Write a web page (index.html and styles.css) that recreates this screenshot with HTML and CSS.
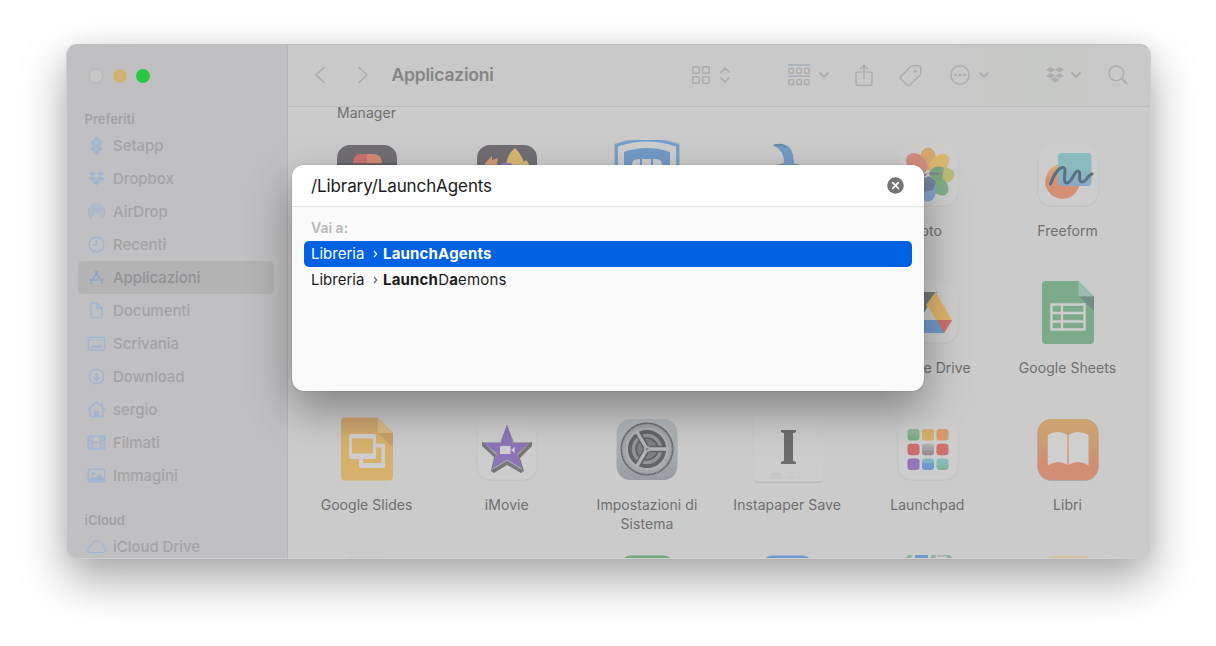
FILE: index.html
```html
<!DOCTYPE html>
<html lang="it">
<head>
<meta charset="utf-8">
<title>Applicazioni</title>
<link rel="stylesheet" href="styles.css">
</head>
<body>
<div class="window">
  <aside class="sidebar">
    <div class="lights"><i class="close"></i><i class="min"></i><i class="max"></i></div>
    <h2>Preferiti</h2>
    <ul>
      <li><svg viewBox="0 0 20 20"><g fill="currentColor" stroke="none"><path d="M10 0l3.200 3.100-3.200 3.100-3.200-3.100zM6.500 3.600l3.200 3.100-3.200 3.100-3.200-3.100zM13.500 3.600l3.200 3.100-3.200 3.100-3.200-3.100zM10 7.100l3 2.900-3 2.900L7 10zM6.500 10.200l3.200 3.100-3.200 3.100-3.200-3.100zM13.500 10.200l3.200 3.100-3.200 3.100-3.200-3.100zM10 13.800l3.200 3.100L10 20l-3.200-3.100z"/></g></svg><span>Setapp</span></li>
      <li><svg viewBox="0 0 20 20"><path fill="currentColor" stroke="none" d="M5.700 2l4.300 2.700-4.300 2.800L1.400 4.700zM14.300 2l4.300 2.700-4.300 2.800L10 4.700zM5.700 7.500l4.300 2.800L5.700 13l-4.300-2.700zM14.300 7.500l4.300 2.800-4.300 2.700-4.300-2.700zM10 11.200l4.300 2.900-4.300 2.900-4.300-2.900z"/></svg><span>Dropbox</span></li>
      <li><svg viewBox="0 0 20 20"><path stroke-width="1.300" d="M4.700 17a8.400 8.400 0 1 1 10.600 0M6.400 14.700a5.800 5.800 0 1 1 7.200 0M8 12.700a3.300 3.300 0 1 1 4 0"/><circle cx="10" cy="10.300" r="1.500" fill="currentColor" stroke="none"/></svg><span>AirDrop</span></li>
      <li><svg viewBox="0 0 20 20"><circle cx="10" cy="10" r="7.700"/><path d="M10 5v5.300H6"/></svg><span>Recenti</span></li>
      <li class="on"><svg viewBox="0 0 20 20"><path stroke-width="1.900" d="M8.700 3l4.800 8.500M14.500 13.300l1.700 3M11.300 3L6.200 12M5 14.500l-1.200 2M2 12.800h9.500M14 12.800h4"/></svg><span>Applicazioni</span></li>
      <li><svg viewBox="0 0 20 20"><path d="M5 2.300h5.800l5 5.200v8.800q0 1-1 1H5q-1 0-1-1v-13q0-1 1-1zM10.500 2.500v5.200h5"/></svg><span>Documenti</span></li>
      <li><svg viewBox="0 0 20 20"><rect x="1.400" y="3.300" width="17.200" height="13.600" rx="1.700"/><path d="M2 6h16" stroke-dasharray="1.500 1"/><path fill="currentColor" stroke="none" d="M4.500 12h11v2.500h-11z"/></svg><span>Scrivania</span></li>
      <li><svg viewBox="0 0 20 20"><circle cx="10" cy="10" r="7.700"/><path d="M10 5.700v8M6.700 10.600l3.300 3.300 3.300-3.300"/></svg><span>Download</span></li>
      <li><svg viewBox="0 0 20 20"><path d="M1 10l9-7.800 9 7.800M3.500 8.500v8.900h13V8.500M15.800 3v3.700"/><path fill="currentColor" stroke="none" d="M7.500 11.500h5V17h-5z"/></svg><span>sergio</span></li>
      <li><svg viewBox="0 0 20 20"><rect x="1.300" y="3.400" width="17.400" height="13.400" rx="1"/><path d="M5.700 4v12.500M14.300 4v12.500M5.700 10h8.600"/><path stroke-width="2.600" stroke-dasharray="1.500 1.100" d="M3.300 4.500v12M16.700 4.500v12"/></svg><span>Filmati</span></li>
      <li><svg viewBox="0 0 20 20"><rect x="1.400" y="3.400" width="17.200" height="13.400" rx="1.700"/><circle cx="6.700" cy="8" r="1.900" fill="currentColor" stroke="none"/><path fill="currentColor" stroke="none" d="M2 14l4-3 2.500 1.700 4.200-4.200L18 13.500v3H2z"/></svg><span>Immagini</span></li>
    </ul>
    <h2 class="cloud">iCloud</h2>
    <ul class="cl">
      <li><svg viewBox="0 0 20 20"><path stroke-width="1.200" d="M4.500 16.500h11.800a3.200 3.200 0 0 0 .200-6.500A5.700 5.700 0 0 0 5.500 7.700 3 3 0 0 0 3 10.300a3.200 3.200 0 0 0 1.500 6.200z"/></svg><span>iCloud Drive</span></li>
    </ul>
  </aside>
  <main class="main">
    <header class="toolbar">
      <svg class="back" width="12" height="18" viewBox="0 0 12 18"><path d="M10 1.500L2 9l8 7.500"/></svg>
      <svg class="fwd" width="12" height="18" viewBox="0 0 12 18"><path d="M2 1.500L10 9l-8 7.500"/></svg>
      <h1>Applicazioni</h1>
      <svg class="view" width="18" height="18" viewBox="0 0 18 18"><rect x=".7" y=".7" width="6.600" height="6.600" rx="1"/><rect x="10.700" y=".7" width="6.600" height="6.600" rx="1"/><rect x=".7" y="10.700" width="6.600" height="6.600" rx="1"/><rect x="10.700" y="10.700" width="6.600" height="6.600" rx="1"/></svg>
      <svg class="updown" width="10" height="16" viewBox="0 0 10 16"><path stroke-width="1.700" d="M1 5l4-4 4 4M1 11l4 4 4-4"/></svg>
      <svg class="group" width="22" height="22" viewBox="0 0 22 22"><path stroke="#a5adb6" d="M.5 1h21M.5 12.200h21"/><rect x="1" y="4.500" width="4.500" height="4.800" rx=".8"/><rect x="8.800" y="4.500" width="4.500" height="4.800" rx=".8"/><rect x="16.500" y="4.500" width="4.500" height="4.800" rx=".8"/><rect x="1" y="15.700" width="4.500" height="4.800" rx=".8"/><rect x="8.800" y="15.700" width="4.500" height="4.800" rx=".8"/><rect x="16.500" y="15.700" width="4.500" height="4.800" rx=".8"/></svg>
      <svg class="chev c1" width="10" height="6" viewBox="0 0 10 6"><path d="M1 1l4 4 4-4"/></svg>
      <svg class="share" width="18" height="23" viewBox="0 0 18 23"><path d="M6 8H3Q1 8 1 10v9.500q0 2 2 2h12q2 0 2-2V10q0-2-2-2h-3M9 14.500V1.500M5.500 5L9 1.500 12.500 5"/></svg>
      <svg class="tag" width="23" height="23" viewBox="0 0 23 23"><path d="M13.500 1.700h5.300q3 0 3 3v4.700q0 1-.8 1.700L10.700 21q-1.300 1.200-2.600 0L2 15q-1.200-1.300 0-2.600L12 2.300q.7-.6 1.500-.6z"/><circle cx="16.200" cy="7.300" r="1.400" fill="currentColor" stroke="none"/></svg>
      <svg class="more" width="20" height="20" viewBox="0 0 20 20"><circle cx="10" cy="10" r="9.200"/><g fill="currentColor" stroke="none"><circle cx="5.500" cy="10" r="1.300"/><circle cx="10" cy="10" r="1.300"/><circle cx="14.500" cy="10" r="1.300"/></g></svg>
      <svg class="chev c2" width="10" height="6" viewBox="0 0 10 6"><path d="M1 1l4 4 4-4"/></svg>
      <svg class="drop" width="18" height="16" viewBox="0 0 18 16"><path fill="currentColor" stroke="none" d="M4.500 0L9 2.800 4.500 5.600 0 2.800zM13.500 0L18 2.800l-4.500 2.800L9 2.800zM4.500 6L9 8.800l-4.500 2.800L0 8.800zM13.500 6L18 8.800l-4.500 2.800L9 8.800zM9 9.900l4.500 2.800L9 15.700l-4.500-3z"/></svg>
      <svg class="chev c3" width="10" height="6" viewBox="0 0 10 6"><path d="M1 1l4 4 4-4"/></svg>
      <svg class="search" width="20" height="20" viewBox="0 0 20 20"><circle cx="8.300" cy="8.300" r="7.400"/><path stroke-width="2" d="M13.700 13.700l5.300 5"/></svg>
    </header>
    <section class="content">
      <div class="label first">Manager</div>
      <div class="grid">
        <figure><svg width="72" height="72" viewBox="0 0 72 72"><rect x="6" y="5" width="60" height="60" rx="13" fill="#716e74"/><path fill="#cd7471" d="M36 14h-6q-8 0-8 9.500h14z"/><path fill="#d58c78" d="M36 14h6q9 0 9 9.500H36z"/><path stroke="#555" d="M6 24h60"/></svg><figcaption class="label">Figma</figcaption></figure>
        <figure><svg width="72" height="72" viewBox="0 0 72 72"><rect x="6" y="5" width="60" height="60" rx="13" fill="#716e74"/><path fill="#d9b873" d="M35 26Q36 14 44 8q6 6 9 14l2-2q4 4 5 10H35z"/><path fill="#d99a70" d="M12 29l3-7 6-6v4l6-2-2 12z"/><path fill="#8d77bf" d="M26 28q5-8 15-4v7z"/></svg><figcaption class="label">Fork</figcaption></figure>
        <figure><svg width="72" height="72" viewBox="0 0 72 72"><path fill="#cecece" stroke="#a9aeb4" stroke-width="4.600" d="M5.500 5.500Q36-5 66.500 5.500V40q-3 20-30.500 28Q8 60 5.500 40z"/><path fill="#cecece" stroke="#6f9fd0" stroke-width="2.600" d="M5.500 5.500Q36-5 66.500 5.500V40q-3 20-30.500 28Q8 60 5.500 40z"/><path fill="#739bc8" d="M13 12q23-8 46 0v30q-5 12-23 20-18-8-23-20z"/><path fill="#cecece" d="M21 30v-5q0-6 6-6h2v10h2V19h9v10h2V19h3q6 0 6 6v5z"/></svg><figcaption class="label">Forklift</figcaption></figure>
        <figure><svg width="72" height="72" viewBox="0 0 72 72"><ellipse cx="36" cy="28" rx="15" ry="5" fill="#92989c"/><path fill="#759cc5" d="M21 5Q38 1 41 15q1.500 7 1 13H31Q35 12 21 5z"/><path stroke="#688ca1" stroke-width="2" d="M22 5.500q9-2 12 2"/></svg><figcaption class="label">Forecast</figcaption></figure>
        <figure><svg width="72" height="72" viewBox="0 0 72 72"><use href="#tile"/><g opacity=".93"><ellipse cx="36" cy="19" rx="8" ry="11.500" fill="#d7a469"/><ellipse cx="36" cy="19" rx="8" ry="11.500" fill="#ddb768" transform="rotate(45 36 35)"/><ellipse cx="36" cy="20" rx="8" ry="11.500" fill="#b9b871" transform="rotate(90 36 35)"/><ellipse cx="36" cy="20" rx="8" ry="11.500" fill="#7bab82" transform="rotate(135 36 35)"/><ellipse cx="36" cy="20" rx="8" ry="11.500" fill="#7e9fc8" transform="rotate(180 36 35)"/><ellipse cx="36" cy="20" rx="8" ry="11.500" fill="#8b83ad" transform="rotate(225 36 35)"/><ellipse cx="36" cy="20" rx="8" ry="11.500" fill="#ca7b91" transform="rotate(270 36 35)"/><ellipse cx="36" cy="19" rx="9" ry="12" fill="#d38979" transform="rotate(315 36 35)"/><path fill="#79a17e" d="M36 35q5-12 16-7-1 8-3 14z"/><path fill="#6c7d9c" d="M36 35l8 7-3 8-9 2-2-9z"/><path stroke="#86758c" stroke-width="2" d="M30 36q8-4 17-2"/><circle cx="36" cy="35" r="1.700" fill="#ccc"/></g></svg><figcaption class="label">Foto</figcaption></figure>
        <figure><svg width="72" height="72" viewBox="0 0 72 72"><defs><g id="tile"><rect x="5.700" y="6.400" width="60.600" height="60.200" rx="14" fill="#bebebe"/><rect x="6.200" y="5" width="59.600" height="60.800" rx="13.500" fill="#cdcdcd"/></g><linearGradient id="ff" x2="0" y2="1"><stop stop-color="#d7ae6e"/><stop offset=".5" stop-color="#d48f75"/></linearGradient><linearGradient id="ft" x2="0" y2="1"><stop stop-color="#85bbc0"/><stop offset=".45" stop-color="#85bbc0"/><stop offset="1" stop-color="#86a9c8"/></linearGradient></defs><use href="#tile"/><circle cx="30.500" cy="41.500" r="17.300" fill="url(#ff)"/><rect x="26" y="13" width="33.500" height="33" rx="3.500" fill="url(#ft)" opacity=".95"/><path fill="none" stroke="#5a7183" stroke-width="3" stroke-linecap="round" d="M18.500 44C22 34 27 27.500 31 27.500c5 0-2 15.500 4 15.500 5 0 7-12 11-12 4 0-1 11 4 11 4 0 6-7 10-8"/></svg><figcaption class="label">Freeform</figcaption></figure>

        <figure></figure><figure></figure><figure></figure><figure></figure>
        <figure><svg width="72" height="72" viewBox="0 0 72 72"><use href="#tile"/><path fill="#717b75" d="M27 15h18L24 50l-8-14z"/><path fill="#dfb36c" d="M43.500 15L60 43H44L34 28z"/><path fill="#719ccc" d="M20 43h40l-8 13H14z"/><path fill="#d0706c" d="M45 43h15l-8 13z"/><path fill="#cecece" d="M36 29l8 14H28z"/></svg><figcaption class="label">Google Drive</figcaption></figure>
        <figure><svg width="72" height="72" viewBox="0 0 72 72"><path fill="#7daa8a" d="M14 4h32.500L62 19.500V63q0 4-4 4H14q-4 0-4-4V8q0-4 4-4z"/><path fill="#9bbcad" d="M46.500 4L62 19.500H46.500z"/><path fill="#728c86" d="M47 19.500h15V34z"/><path fill="none" stroke="#cecece" stroke-width="2.400" d="M19.500 27.500h33v25h-33zM30 27.500v25M19.500 36h33M19.500 44.500h33"/></svg><figcaption class="label">Google Sheets</figcaption></figure>

        <figure><svg width="72" height="72" viewBox="0 0 72 72"><defs><linearGradient id="sl" x2="0" y2="1"><stop offset=".15" stop-color="#cda470"/><stop offset=".3" stop-color="#d5b16c"/></linearGradient></defs><path fill="url(#sl)" d="M14 3.500h32.500L62 19v43.500q0 4-4 4H14q-4 0-4-4v-55q0-4 4-4z"/><path fill="#d8bb85" d="M46.500 3.500L62 19H46.500z"/><path fill="#c99f68" d="M47 19h15v14z"/><path fill="#cecece" fill-rule="evenodd" d="M20 20h23q2 0 2 2v7.500h7q2 0 2 2V52q0 2-2 2H30q-2 0-2-2v-7h-8q-2 0-2-2V22q0-2 2-2zm1 4.500v15h21v-15zM45 33.500V43q0 2-2 2H32v4h18.500V33.500z"/></svg><figcaption class="label">Google Slides</figcaption></figure>
        <figure><svg width="72" height="72" viewBox="0 0 72 72"><use href="#tile"/><path fill="#777" d="M36 11l7 18 18-1v4L49 44l4 13-3 2-14-8-13 8-3-2 3-14-12-11v-4l18 1z"/><path fill="#a2a2a2" d="M36 12l6 16 18 0-13 13 4 15-15-9-15 9 4-15-13-13 18 0z"/><path fill="#8c75b8" d="M36 11l6 18h17L46 39.500l5 15L36 45.500l-15 9 5-15L13 29h17z"/><path fill="#cecece" d="M29 32h10.500v8H29zM40 36l3.800-3v6.500z"/></svg><figcaption class="label">iMovie</figcaption></figure>
        <figure><svg width="72" height="72" viewBox="0 0 72 72"><defs><linearGradient id="sy" x2="0" y2="1"><stop stop-color="#b6babc"/><stop offset="1" stop-color="#999ca1"/></linearGradient></defs><rect x="5.500" y="5" width="61" height="61" rx="14" fill="url(#sy)"/><circle cx="36" cy="35" r="26.500" fill="#626467"/><circle cx="36" cy="35" r="23.200" fill="none" stroke="#a5a7a9" stroke-width="3"/><circle cx="36" cy="35" r="24.800" fill="none" stroke="#9a9c9e" stroke-width="1.700" stroke-dasharray="1.100 1.100"/><circle cx="36" cy="35" r="20.500" fill="none" stroke="#adafb1" stroke-width="2.800"/><circle cx="36" cy="35" r="13.500" fill="none" stroke="#929597" stroke-width="3.500"/><circle cx="36" cy="35" r="10" fill="#7d7f82"/><path fill="none" stroke="#626467" stroke-width="6.500" d="M38 35h17M35 33L27 19M35 37L27 51"/><path fill="none" stroke="#b2b4b6" stroke-width="3.400" d="M36 35h20M36 35L26 18M36 35L26 52"/><circle cx="36" cy="35" r="3" fill="#a9abad"/><circle cx="36" cy="35" r="1" fill="#77797b"/></svg><figcaption class="label">Impostazioni di Sistema</figcaption></figure>
        <figure><svg width="72" height="72" viewBox="0 0 72 72"><rect x="2" y="3" width="69" height="66" rx="3" fill="#bababa"/><rect x="2" y="0" width="69" height="67.500" rx="3" fill="#cdcdcd"/><path stroke="#c8c8c8" stroke-width="1" stroke-dasharray="8 3" fill="none" d="M6 58h10M34 55h14M34 59h14M34 63h14M52 57h14M52 61h14"/><path fill="#c7c7c7" d="M17 65a7 7 0 1 1 14 0z"/><path fill="#6d6d70" d="M29 16h15v2l-3 1.200v27.600l3 1.200V50H29v-2l3-1.200V19.200L29 18z"/></svg><figcaption class="label">Instapaper Save</figcaption></figure>
        <figure><svg width="72" height="72" viewBox="0 0 72 72"><defs><linearGradient id="l1" x2="0" y2="1"><stop offset=".3" stop-color="#90b39a"/><stop offset=".8" stop-color="#77ad84"/></linearGradient><linearGradient id="l5" x2="0" y2="1"><stop stop-color="#b2b2b4"/><stop offset="1" stop-color="#8c8c8e"/></linearGradient><linearGradient id="l8" x2="0" y2="1"><stop offset=".3" stop-color="#80b4c4"/><stop offset=".5" stop-color="#7198cb"/></linearGradient><linearGradient id="l9" x2="0" y2="1"><stop offset=".4" stop-color="#86babd"/><stop offset="1" stop-color="#7fae94"/></linearGradient></defs><use href="#tile"/><rect x="15.500" y="15" width="12" height="11.500" rx="3" fill="url(#l1)"/><rect x="30" y="15" width="12" height="11.500" rx="3" fill="#d4ae69"/><rect x="44.500" y="15" width="12" height="11.500" rx="3" fill="#d59b6c"/><rect x="15.500" y="29.700" width="12" height="11.500" rx="3" fill="#ca6f6c"/><rect x="30" y="29.700" width="12" height="11.500" rx="3" fill="url(#l5)"/><rect x="44.500" y="29.700" width="12" height="11.500" rx="3" fill="#cf716c"/><rect x="15.500" y="44.400" width="12" height="11.500" rx="3" fill="#9474b4"/><rect x="30" y="44.400" width="12" height="11.500" rx="3" fill="url(#l8)"/><rect x="44.500" y="44.400" width="12" height="11.500" rx="3" fill="url(#l9)"/></svg><figcaption class="label">Launchpad</figcaption></figure>
        <figure><svg width="72" height="72" viewBox="0 0 72 72"><defs><linearGradient id="bk" x2="0" y2="1"><stop stop-color="#cba46f"/><stop offset=".35" stop-color="#cb9d71"/><stop offset=".75" stop-color="#d28d75"/></linearGradient></defs><rect x="5.500" y="5.500" width="61" height="61.500" rx="14" fill="#b0aaa5"/><rect x="5.500" y="5" width="61" height="61" rx="14" fill="url(#bk)"/><path fill="#cfcfcf" d="M35.300 21q-4-3-9-3-6 0-10.500 3v30.500q5-3.500 10-3.500 5.500 0 9.500 3zM36.700 21q4-3 9-3 6 0 10.800 3v30.500q-5-3.500-10-3.500-5.800 0-9.800 3z"/></svg><figcaption class="label">Libri</figcaption></figure>

        <figure><svg width="72" height="72" viewBox="0 0 72 72"><rect x="12" y="5" width="46" height="60" rx="10" fill="#c6c6c6"/></svg></figure>
        <figure></figure>
        <figure><svg width="72" height="72" viewBox="0 0 72 72"><rect x="10" y="4.500" width="52" height="60" rx="9" fill="#72aa7f"/><path stroke="#a9b46d" stroke-dasharray="5 4" d="M24 7.500h26"/></svg></figure>
        <figure><svg width="72" height="72" viewBox="0 0 72 72"><rect x="9" y="4.500" width="53" height="60" rx="12" fill="#6f99d1"/></svg></figure>
        <figure><svg width="72" height="72" viewBox="0 0 72 72"><path fill="#91b59c" d="M13 8l3-4h5l-3 4zM39 4h5l-1 4h-4zM53 4h5l3 4h-5z"/><path fill="#7199cc" d="M23 4h13v5H23z"/><path fill="#b4b4b4" d="M45 4h8v2h-8z"/></svg></figure>
        <figure><svg width="72" height="72" viewBox="0 0 72 72"><rect x="13" y="5.200" width="47" height="50" rx="7" fill="#d2c09c"/></svg></figure>
      </div>
    </section>
  </main>
  <div class="panel">
    <div class="field"><span class="path">/Library/LaunchAgents</span>
      <svg width="17" height="17" viewBox="0 0 17 17"><circle cx="8.500" cy="8.500" r="8.300" fill="#757575"/><path d="M5.700 5.700l5.600 5.600M11.300 5.700l-5.600 5.600" stroke="#fff" stroke-width="1.800" stroke-linecap="round"/></svg>
    </div>
    <div class="results">
      <div class="hint">Vai a:</div>
      <div class="row sel"><span class="lib">Libreria</span><svg width="5" height="8" viewBox="0 0 5 8"><path d="M1 1l2.700 3L1 7"/></svg><span class="name"><b>LaunchAgents</b></span></div>
      <div class="row"><span class="lib">Libreria</span><svg width="5" height="8" viewBox="0 0 5 8"><path d="M1 1l2.700 3L1 7"/></svg><span class="name"><b>Launch</b>D<b>a</b>emons</span></div>
    </div>
  </div>
</div>
</body>
</html>
```
FILE: styles.css
```css
* { box-sizing: border-box; }
body {
  margin: 0;
  height: 646px;
  overflow: hidden;
  padding: 44px 65.500px 0;
  background: #fff;
  font-family: Inter, "Liberation Sans", sans-serif;
}
h1, h2, ul, figure { margin: 0; padding: 0; }
ul { list-style: none; }
svg { display: block; flex: none; }

.window {
  position: relative;
  display: flex;
  width: 1085px;
  height: 515px;
  border-radius: 12px;
  background: #cbcbcb;
  box-shadow: 0 20px 46px rgba(0, 0, 0, .35), 0 0 20px rgba(0, 0, 0, .05);
}
.window::after {
  content: "";
  position: absolute;
  inset: 0;
  border-radius: 12px;
  border: 1px solid #cfcfcf;
  border-top-color: #bdbdbd;
  pointer-events: none;
}

.sidebar {
  width: 222px;
  padding: 24.500px 13px 0 12px;
  border-right: 1px solid #b6b6b7;
  border-radius: 12px 0 0 12px;
  background: #c0c0c2;
  overflow: hidden;
}
.lights { display: flex; gap: 9.700px; padding-left: 11.500px; height: 14.500px; }
.lights i { width: 14px; height: 14px; border-radius: 50%; }
.close { background: #c9c9c9; border: 1px solid #b7b7b7; }
.min { background: #d1b073; }
.max { background: #2bc840; }
.sidebar h2 {
  height: 18px;
  margin: 27px 0 0 7px;
  font-size: 13px;
  line-height: 18px;
  font-weight: 600;
  color: #a2a2a4;
}
.sidebar ul { margin-top: 1px; }
.sidebar li {
  display: flex;
  align-items: center;
  gap: 7px;
  height: 33px;
  padding-left: 9.500px;
  border-radius: 5px;
  font-size: 15px;
  font-weight: 500;
  letter-spacing: -.05px;
  color: #a3a3a5;
}
.sidebar li svg {
  width: 19px;
  height: 19px;
  fill: none;
  stroke: currentColor;
  stroke-width: 1.600;
  color: #a2b4cf;
}
.sidebar li.on { background: #b3b3b4; color: #929294; }
.sidebar li.on svg { color: #8fa5c3; }
.sidebar h2.cloud { margin-top: 19px; }
.sidebar ul.cl { margin-top: 1px; }

.main { flex: 1; min-width: 0; display: flex; flex-direction: column; }
.toolbar {
  display: flex;
  align-items: center;
  height: 63px;
  padding-left: 26px;
  border-bottom: 1px solid #bcbcbc;
  border-radius: 0 12px 0 0;
  background: linear-gradient(90deg, #c9c9c9 70%, #c7c9c6 88%, #c9c9c9);
  color: #adadad;
}
.toolbar svg { fill: none; stroke: currentColor; stroke-width: 1.500; stroke-linecap: round; stroke-linejoin: round; }
.toolbar .chev { stroke-width: 1.900; }
.toolbar h1 { width: 300px; margin-left: 23px; font-size: 17.500px; line-height: 22px; font-weight: 600; letter-spacing: -.2px; color: #858585; }
.toolbar .back, .toolbar .fwd { stroke-width: 1.700; }
.fwd { margin-left: 31px; }
.updown { margin-left: 10px; }
.group { margin-left: 58px; }
.c1 { margin-left: 9px; }
.share { margin-left: 26px; }
.tag { margin-left: 26px; }
.more { margin-left: 28px; }
.c2 { margin-left: 9px; }
.drop { margin-left: 57px; }
.c3 { margin-left: 7px; }
.search { margin-left: 27px; }

.content { flex: 1; min-height: 0; margin-top: -4px; overflow: hidden; padding-left: 9px; border-radius: 0 0 12px 0; }
.label { font-size: 14px; line-height: 19px; font-weight: 400; letter-spacing: .05px; text-align: center; color: #6f6f6f; }
.first { width: 140px; margin: 0 0 18px; }
.grid { display: grid; grid-template-columns: repeat(6, 140.200px); grid-auto-rows: 137px; }
.grid figure { display: flex; flex-direction: column; align-items: center; gap: 8.500px; }
.grid figcaption { width: 124px; }
.grid svg { fill: none; margin-left: 1px; }

.panel {
  position: absolute;
  left: 226.500px;
  top: 121px;
  z-index: 1;
  width: 631.500px;
  height: 226px;
  border-radius: 12px;
  background: #fafafa;
  overflow: hidden;
  box-shadow: 0 0 1px rgba(0, 0, 0, .5), 0 18px 44px rgba(0, 0, 0, .36);
}
.field {
  display: flex;
  align-items: center;
  justify-content: space-between;
  height: 42px;
  padding: 0 20px 0 19px;
  border-bottom: 1px solid #e3e3e3;
  background: #fff;
  font-size: 17px;
  letter-spacing: -.1px;
  color: #1b1b1b;
}
.results { padding: 9.500px 12px; }
.hint { height: 24px; padding-left: 7px; font-size: 14px; line-height: 22px; font-weight: 600; color: #b9b9b9; }
.row { display: flex; align-items: center; height: 26px; padding-left: 7px; border-radius: 5px; font-size: 15px; line-height: 25px; color: #1c1c1c; }
.row.sel { background: #0061e3; color: #fff; }
.row svg { margin: 1px 5px 0 8px; fill: none; stroke: currentColor; stroke-width: 1.200; }
.row:not(.sel) svg { color: #666; }
.lib { width: 54px; }
.row b { font-weight: 700; }
.name { letter-spacing: .18px; }
```
